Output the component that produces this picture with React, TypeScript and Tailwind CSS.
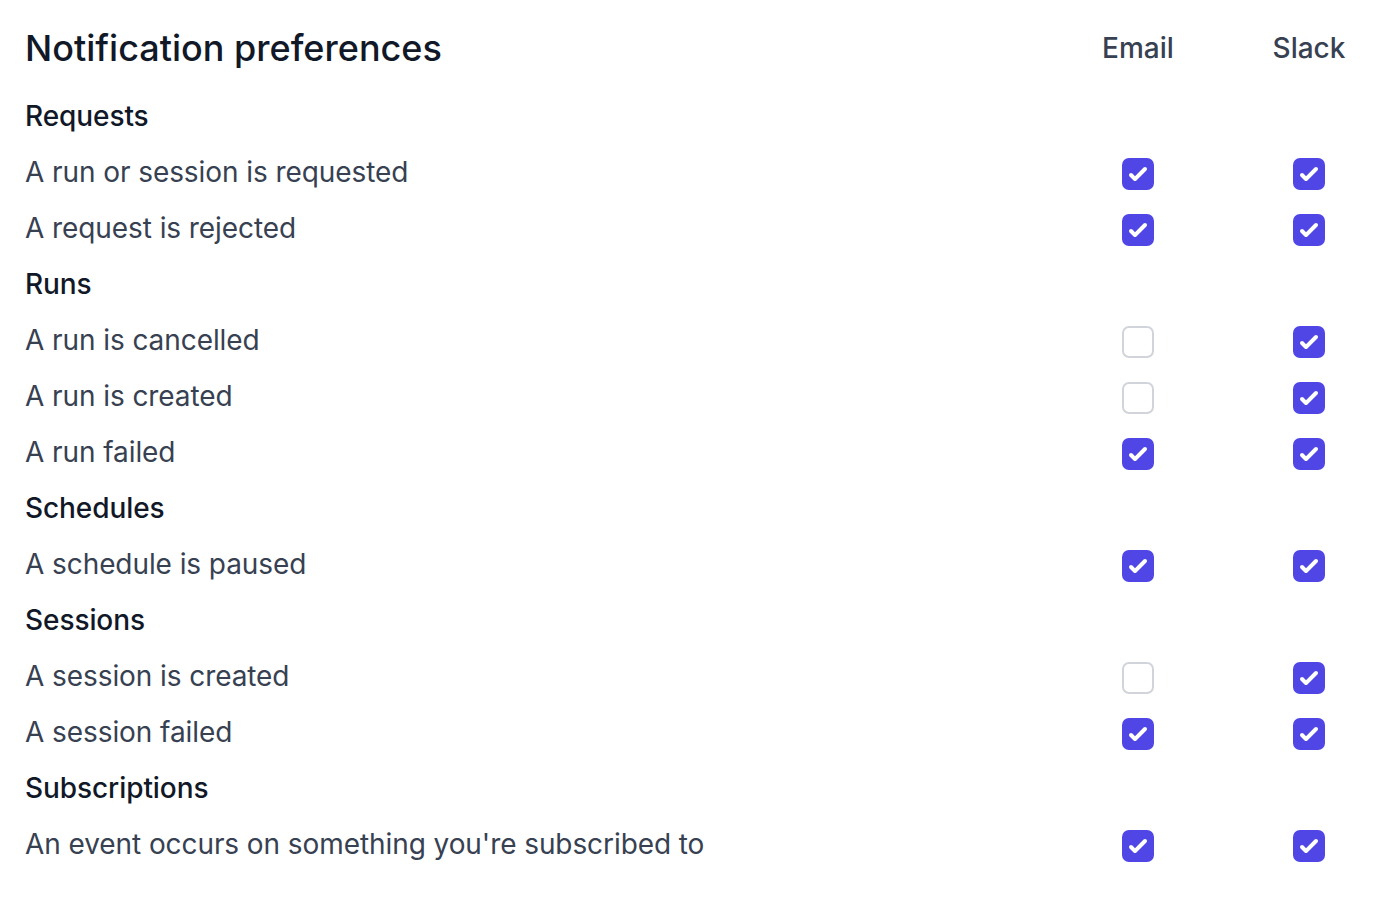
import React from "react";

type Row = { label: string; email: boolean; slack: boolean };
type Section = { title: string; rows: Row[] };

const sections: Section[] = [
  {
    title: "Requests",
    rows: [
      { label: "A run or session is requested", email: true, slack: true },
      { label: "A request is rejected", email: true, slack: true },
    ],
  },
  {
    title: "Runs",
    rows: [
      { label: "A run is cancelled", email: false, slack: true },
      { label: "A run is created", email: false, slack: true },
      { label: "A run failed", email: true, slack: true },
    ],
  },
  {
    title: "Schedules",
    rows: [{ label: "A schedule is paused", email: true, slack: true }],
  },
  {
    title: "Sessions",
    rows: [
      { label: "A session is created", email: false, slack: true },
      { label: "A session failed", email: true, slack: true },
    ],
  },
  {
    title: "Subscriptions",
    rows: [
      { label: "An event occurs on something you're subscribed to", email: true, slack: true },
    ],
  },
];

function Box({ checked }: { checked: boolean }) {
  if (checked) {
    return (
      <div className="mt-[3px] w-[32px] h-[32px] rounded-[7px] bg-[#4f46e5] flex items-center justify-center">
        <svg viewBox="0 0 16 16" className="w-[32px] h-[32px]" fill="#ffffff">
          <path d="M12.207 4.793a1 1 0 010 1.414l-5 5a1 1 0 01-1.414 0l-2-2a1 1 0 011.414-1.414L6.5 9.086l4.293-4.293a1 1 0 011.414 0z" />
        </svg>
      </div>
    );
  }
  return <div className="mt-[3px] w-[32px] h-[32px] rounded-[7px] border-2 border-[#d1d5db] bg-white" />;
}

export default function App() {
  return (
    <div
      className="w-[1380px] h-[898px] bg-white pl-[25px] pr-[21px] pt-[20px]"
      style={{ fontFamily: "Inter, 'Noto Sans', sans-serif" }}
    >
      <div className="grid grid-cols-[1fr_100px_100px] gap-x-[71px]">
        <div className="h-[56px] flex items-center text-[36px] font-medium text-[#111827]">
          Notification preferences
        </div>
        <div className="h-[56px] flex items-center justify-center text-[28px] font-medium text-[#374151]">
          Email
        </div>
        <div className="h-[56px] flex items-center justify-center text-[28px] font-medium text-[#374151]">
          Slack
        </div>
        <div className="col-span-3 h-[12px]" />
        {sections.map((s) => (
          <React.Fragment key={s.title}>
            <div className="col-span-3 h-[56px] flex items-center text-[28px] font-medium text-[#111827] tracking-[-0.08px]">
              {s.title}
            </div>
            {s.rows.map((r) => (
              <React.Fragment key={r.label}>
                <div className="h-[56px] flex items-center text-[28px] text-[#374151] tracking-[-0.08px]">
                  {r.label}
                </div>
                <div className="h-[56px] flex items-center justify-center">
                  <Box checked={r.email} />
                </div>
                <div className="h-[56px] flex items-center justify-center">
                  <Box checked={r.slack} />
                </div>
              </React.Fragment>
            ))}
          </React.Fragment>
        ))}
      </div>
    </div>
  );
}
